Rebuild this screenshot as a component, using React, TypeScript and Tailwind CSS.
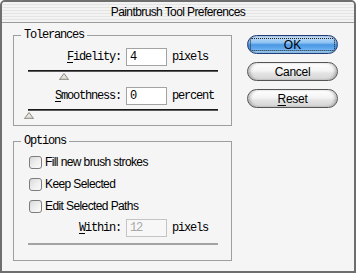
import React from "react";

const mono = { fontFamily: '"Liberation Mono", "DejaVu Sans Mono", monospace' } as const;
const sans = { fontFamily: '"Liberation Sans", Arial, sans-serif' } as const;

function Thumb() {
  return (
    <svg width="10" height="7" viewBox="0 0 10 7" className="block">
      <polygon points="0.5,6.5 5,0.5 9.5,6.5" fill="#e6e4df" stroke="#8c8880" strokeWidth="1" />
      <line x1="1.5" y1="6" x2="8.5" y2="6" stroke="#b8b4ad" strokeWidth="1" />
    </svg>
  );
}

function Slider({ pos }: { pos: number }) {
  return (
    <div className="relative ml-[14px] h-[8px] w-[190px]">
      <div className="h-[1px] w-full bg-[#1a1a1a]" />
      <div className="h-[1px] w-full bg-[#5a5a5a]" />
      <div className="absolute top-[3px]" style={{ left: pos }}>
        <Thumb />
      </div>
    </div>
  );
}

function Field({
  label,
  ul,
  value,
  unit,
  disabled,
}: {
  label: string;
  ul: string;
  value: string;
  unit: string;
  disabled?: boolean;
}) {
  return (
    <div className="flex h-[18px] items-center text-[12px] tracking-[-1.2px] text-black" style={mono}>
      <div className="w-[107px] text-right leading-[12px]">
        <span className="underline underline-offset-[2px]">{ul}</span>
        {label}
      </div>
      <div
        className={
          "ml-[5px] flex h-[18px] w-[41px] items-center border pl-[3px] leading-[12px] " +
          (disabled ? "border-[#c4c4c4] bg-[#f7f7f7] text-[#a8a8a8]" : "border-[#a3a3a3] bg-white text-black")
        }
      >
        {value}
      </div>
      <div className="ml-[5px] leading-[12px]">{unit}</div>
    </div>
  );
}

function Check({ label }: { label: string }) {
  return (
    <div className="ml-[15px] flex h-[16px] items-center gap-[3px]">
      <div className="h-[13px] w-[13px] rounded-[3px] border border-[#7d7d7d] bg-gradient-to-br from-[#d8d8d8] via-[#eeeeee] to-[#fbfbfb]" />
      <span className="text-[12px] leading-[14px] tracking-[-0.6px] text-black" style={sans}>
        {label}
      </span>
    </div>
  );
}

function Group({ title, h, children }: { title: string; h: string; children: React.ReactNode }) {
  return (
    <div className={"flex w-[219px] flex-col border border-[#9e9e9e] " + h}>
      <span
        className="-mt-[7px] ml-[7px] w-fit bg-[#f5f5f5] px-[3px] text-[12px] leading-[12px] tracking-[-1.2px] text-black"
        style={mono}
      >
        {title}
      </span>
      {children}
    </div>
  );
}

export default function App() {
  return (
    <div className="flex h-[273px] w-[356px] flex-col overflow-hidden rounded-t-[5px] border-2 border-[#6e6e6e] bg-[#f5f5f5]">
      <div className="flex h-[20px] items-center justify-center bg-[repeating-linear-gradient(180deg,#f3f3f3_0px,#f3f3f3_2px,#e4e4e4_2px,#e4e4e4_3px)]">
        <span className="text-[12px] tracking-[-0.6px] text-black" style={sans}>
          Paintbrush Tool Preferences
        </span>
      </div>
      <div className="h-[1px] bg-[#9a9a9a]" />
      <div className="flex flex-1 pl-[11px] pt-[12px]">
        <div className="flex flex-col">
          <Group title="Tolerances" h="h-[91px]">
            <div className="mt-[7px]">
              <Field ul="F" label="idelity:" value="4" unit="pixels" />
            </div>
            <div className="mt-[4px]">
              <Slider pos={31} />
            </div>
            <div className="mt-[9px]">
              <Field ul="S" label="moothness:" value="0" unit="percent" />
            </div>
            <div className="mt-[4px]">
              <Slider pos={-4} />
            </div>
          </Group>
          <div className="mt-[15px]">
            <Group title="Options" h="h-[120px]">
              <div className="mt-[7px] flex flex-col gap-[6px]">
                <Check label="Fill new brush strokes" />
                <Check label="Keep Selected" />
                <Check label="Edit Selected Paths" />
              </div>
              <div className="mt-[5px]">
                <Field ul="W" label="ithin:" value="12" unit="pixels" disabled />
              </div>
              <div className="ml-[14px] mt-[6px] h-[2px] w-[190px] bg-[#a3a3a3]" />
            </Group>
          </div>
        </div>
        <div className="ml-[15px] flex flex-col gap-[8px]">
          <button className="flex h-[19px] w-[91px] items-stretch rounded-full border border-[#203f78] bg-[linear-gradient(180deg,#cfe6fc_0%,#8cc2f2_40%,#4a97e4_52%,#62aaee_75%,#aadafc_100%)] p-[2px] shadow-[inset_0_0_2px_rgba(0,0,40,0.5)]">
            <span
              className="flex flex-1 items-center justify-center rounded-[2px] border border-dotted border-[#222] text-[12px] text-black"
              style={sans}
            >
              OK
            </span>
          </button>
          <button
            className="flex h-[19px] w-[91px] items-center justify-center rounded-full border border-[#555] bg-[linear-gradient(180deg,#ffffff_0%,#f4f4f4_45%,#e4e4e4_60%,#d4d4d4_100%)] text-[12px] tracking-[-0.3px] text-black shadow-[inset_3px_0_3px_-1px_rgba(0,0,0,0.25),inset_-3px_0_3px_-1px_rgba(0,0,0,0.25)]"
            style={sans}
          >
            Cancel
          </button>
          <button
            className="flex h-[19px] w-[91px] items-center justify-center rounded-full border border-[#555] bg-[linear-gradient(180deg,#ffffff_0%,#f4f4f4_45%,#e4e4e4_60%,#d4d4d4_100%)] text-[12px] tracking-[-0.3px] text-black shadow-[inset_3px_0_3px_-1px_rgba(0,0,0,0.25),inset_-3px_0_3px_-1px_rgba(0,0,0,0.25)]"
            style={sans}
          >
            <span className="underline underline-offset-[2px]">R</span>eset
          </button>
        </div>
      </div>
    </div>
  );
}
